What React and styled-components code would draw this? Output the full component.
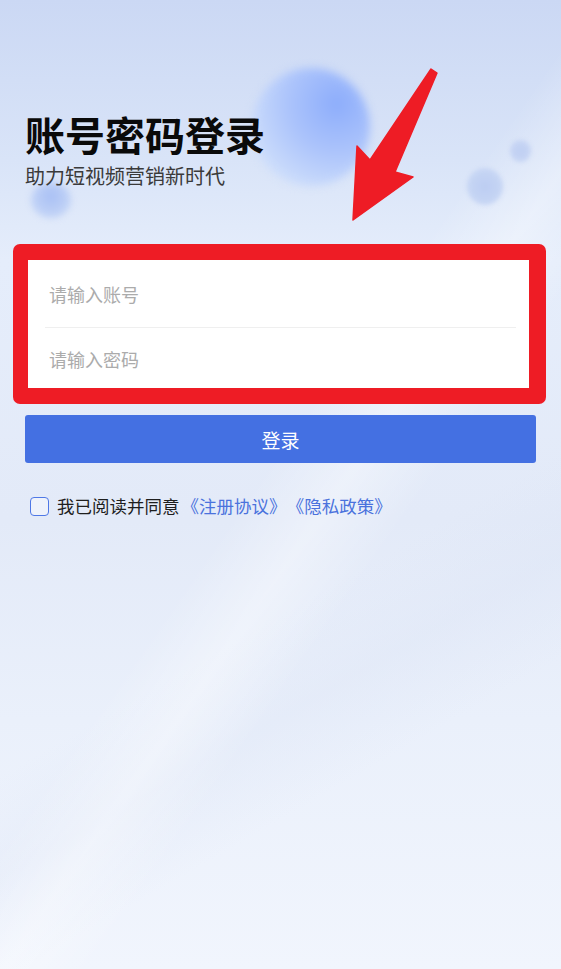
import React from "react";
import styled, { createGlobalStyle } from "styled-components";

const Global = createGlobalStyle`
  html, body { margin: 0; padding: 0; }
  body {
    font-family: "Noto Sans CJK SC", "Noto Sans", sans-serif;
    background: #eef3fc;
  }
  * { box-sizing: border-box; }
`;

const Page = styled.div`
  position: relative;
  width: 561px;
  min-height: 969px;
  overflow: hidden;
  background:
    linear-gradient(125deg, rgba(255,255,255,0) 48%, rgba(255,255,255,0.35) 55%, rgba(255,255,255,0) 62%),
    linear-gradient(150deg, rgba(255,255,255,0) 60%, rgba(220,228,245,0.35) 68%, rgba(255,255,255,0) 76%),
    linear-gradient(180deg, #cbd8f4 0px, #d9e4f8 160px, #e5edfb 260px, #e3eaf8 520px, #eaf0fb 720px, #f1f5fd 969px);
  display: flex;
  flex-direction: column;
  padding: 110px 25px 0 25px;
`;

const Bubble = styled.div`
  position: absolute;
  border-radius: 50%;
  filter: blur(${(p) => p.$blur}px);
  background: ${(p) => p.$bg};
`;

const ArrowSvg = styled.svg`
  position: absolute;
  left: 0;
  top: 0;
  pointer-events: none;
`;

const Header = styled.div`
  position: relative;
  display: flex;
  flex-direction: column;
`;

const Title = styled.h1`
  margin: 0;
  font-size: 40px;
  line-height: 48px;
  font-weight: 700;
  color: #0a0a0a;
`;

const Subtitle = styled.p`
  margin: 5px 0 0 0;
  font-size: 20px;
  line-height: 26px;
  color: #3a3a3a;
`;

const Highlight = styled.div`
  position: relative;
  margin: 55px -10px 0 -12px;
  background: #ee1c25;
  border-radius: 7px;
  padding: 16px 17px 16px 15px;
`;

const Card = styled.div`
  background: #ffffff;
  display: flex;
  flex-direction: column;
`;

const Field = styled.div`
  height: ${(p) => p.$h}px;
  padding: ${(p) => p.$pt}px 20px 0 21px;
  display: flex;
  align-items: center;
`;

const Input = styled.input`
  border: none;
  outline: none;
  width: 100%;
  font-family: inherit;
  font-size: 18px;
  background: transparent;
  padding: 0;
  color: #222;
  &::placeholder { color: #ababab; }
`;

const Divider = styled.div`
  height: 1px;
  margin: 0 13px 0 17px;
  background: #efefef;
`;

const Button = styled.button`
  position: relative;
  margin-top: 11px;
  height: 48px;
  border: none;
  border-radius: 3px;
  background: #4470e2;
  color: #fff;
  font-family: inherit;
  font-size: 19px;
  cursor: pointer;
`;

const Agree = styled.label`
  position: relative;
  margin-top: 33px;
  padding-left: 5px;
  display: flex;
  align-items: center;
  gap: 8px;
  font-size: 17.5px;
  line-height: 20px;
  color: #1e1e1e;
`;

const Box = styled.span`
  width: 19px;
  height: 19px;
  border: 1.5px solid #4f78e6;
  border-radius: 4px;
  background: rgba(255,255,255,0.4);
  flex: none;
`;

const Link = styled.span`
  color: #4a72dd;
  margin-left: ${(p) => p.$gap}px;
`;

export default function App() {
  return (
    <>
      <Global />
      <Page>
        <Bubble
          $blur={4}
          $bg="radial-gradient(circle at 72% 30%, #8dadfb 0%, #abc3fb 40%, #cfdffb 80%, #d9e5fb 100%)"
          style={{ left: 252, top: 68, width: 118, height: 118 }}
        />
        <Bubble
          $blur={3}
          $bg="radial-gradient(circle at 50% 40%, #a9c0f5 0%, #c3d4f6 70%, #d5e1f7 100%)"
          style={{ left: 31, top: 182, width: 40, height: 36 }}
        />
        <Bubble
          $blur={2}
          $bg="radial-gradient(circle at 50% 50%, #bccdf2 0%, #c7d6f4 70%, #d3def6 100%)"
          style={{ left: 467, top: 168, width: 36, height: 37 }}
        />
        <Bubble
          $blur={2}
          $bg="radial-gradient(circle at 50% 50%, #bfcff2 0%, #cbd8f5 100%)"
          style={{ left: 510, top: 140, width: 21, height: 22 }}
        />
        <Header>
          <Title>账号密码登录</Title>
          <Subtitle>助力短视频营销新时代</Subtitle>
        </Header>
        <Highlight>
          <Card>
            <Field $h={67} $pt={0}>
              <Input placeholder="请输入账号" />
            </Field>
            <Divider />
            <Field $h={60} $pt={2}>
              <Input type="password" placeholder="请输入密码" />
            </Field>
          </Card>
        </Highlight>
        <Button>登录</Button>
        <Agree>
          <Box />
          <span>
            我已阅读并同意<Link $gap={2}>《注册协议》</Link><Link $gap={9}>《隐私政策》</Link>
          </span>
        </Agree>
        <ArrowSvg width="561" height="969" viewBox="0 0 561 969">
          <polygon
            points="431,69 437,73 395,172 413,177 353,220 357,146 370,160"
            fill="#ee1c25"
            stroke="#ee1c25"
            strokeWidth="1.5"
            strokeLinejoin="round"
          />
        </ArrowSvg>
      </Page>
    </>
  );
}
